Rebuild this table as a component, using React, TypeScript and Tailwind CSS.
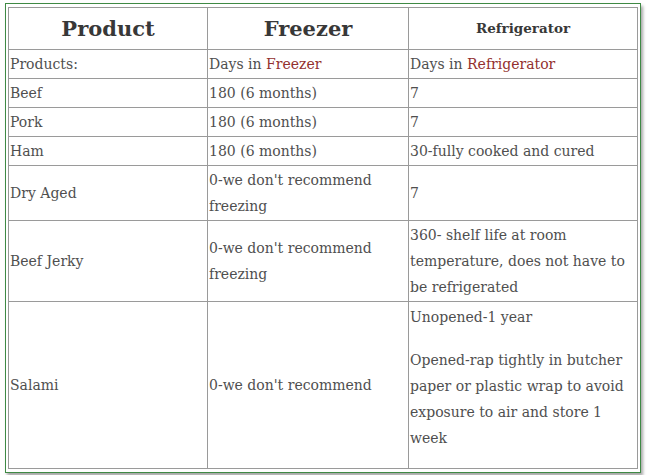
const bodyFont = "font-['DejaVu_Serif','Liberation_Serif',serif]";

const rows: { product: string; freezer: string; fridge: React.ReactNode }[] = [
  { product: 'Beef', freezer: '180 (6 months)', fridge: '7' },
  { product: 'Pork', freezer: '180 (6 months)', fridge: '7' },
  { product: 'Ham', freezer: '180 (6 months)', fridge: '30-fully cooked and cured' },
  { product: 'Dry Aged', freezer: "0-we don't recommend freezing", fridge: '7' },
  {
    product: 'Beef Jerky',
    freezer: "0-we don't recommend freezing",
    fridge: '360- shelf life at room temperature, does not have to be refrigerated',
  },
  {
    product: 'Salami',
    freezer: "0-we don't recommend",
    fridge: (
      <>
        <p className="mt-[1px] mb-[17px]">Unopened-1 year</p>
        <p className="mb-[16px]">
          Opened-rap tightly in butcher paper or plastic wrap to avoid exposure to air and store 1 week
        </p>
      </>
    ),
  },
];

const cell = 'border border-[#9a9a9a] px-[1px] py-[1px] align-middle';

export default function App() {
  return (
    <div className="bg-white w-[647px] h-[475px] pt-[3px] pl-[5px]">
      <div className="w-[636px] border border-[#3f8a45] pt-[3px] pl-[2px] pr-[3px] pb-[3px] shadow-[2px_3px_3px_rgba(0,0,0,0.35)]">
        <table className={`w-[629px] table-fixed border-collapse text-[14px] leading-[26px] text-[#4f4f4f] ${bodyFont}`}>
          <colgroup>
            <col className="w-[199px]" />
            <col className="w-[201px]" />
            <col className="w-[229px]" />
          </colgroup>
          <thead>
            <tr>
              <th className={`${cell} text-center text-[21px] leading-[39px] font-bold text-[#383838]`}>Product</th>
              <th className={`${cell} text-center text-[21px] leading-[39px] font-bold text-[#383838]`}>Freezer</th>
              <th className={`${cell} text-center text-[13.5px] leading-[39px] font-bold text-[#383838]`}>Refrigerator</th>
            </tr>
          </thead>
          <tbody>
            <tr>
              <td className={cell}>Products:</td>
              <td className={cell}>
                Days in <span className="text-[#93302e]">Freezer</span>
              </td>
              <td className={cell}>
                Days in <span className="text-[#93302e]">Refrigerator</span>
              </td>
            </tr>
            {rows.map((row) => (
              <tr key={row.product}>
                <td className={cell}>{row.product}</td>
                <td className={cell}>{row.freezer}</td>
                <td className={cell}>{row.fridge}</td>
              </tr>
            ))}
          </tbody>
        </table>
      </div>
    </div>
  );
}
